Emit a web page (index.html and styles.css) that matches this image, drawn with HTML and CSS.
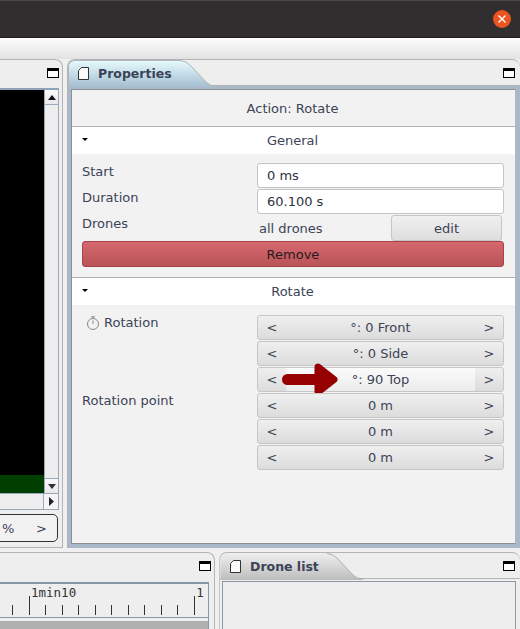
FILE: index.html
```html
<!DOCTYPE html>
<html lang="en">
<head>
<meta charset="utf-8">
<title>Properties</title>
<link rel="stylesheet" href="styles.css">
</head>
<body>
<div class="app">
  <header class="titlebar">
    <div class="close">
      <svg width="18" height="18" viewBox="0 0 18 18"><path d="M5.500 5.500l7 7M12.500 5.500l-7 7" stroke="#fff" stroke-width="1.400" fill="none"/></svg>
    </div>
  </header>
  <div class="toolbar"></div>

  <div class="row row-top">
    <section class="panel panel-viewer">
      <div class="head head-plain"><span class="maxi"></span></div>
      <div class="viewer">
        <div class="viewer-main">
          <div class="canvas"><div class="green"></div></div>
          <div class="vscroll">
            <div class="sbtn"><svg width="8" height="5" viewBox="0 0 8 5"><path d="M4 0l4 5H0z" fill="#111"/></svg></div>
            <div class="strack"></div>
            <div class="sbtn sbtn-end"><svg width="8" height="5" viewBox="0 0 8 5"><path d="M0 0h8L4 5z" fill="#333"/></svg></div>
          </div>
        </div>
        <div class="hscroll">
          <div class="htrack"></div>
          <div class="hbtn"><svg width="5" height="9" viewBox="0 0 5 9"><path d="M0 0l5 4.500L0 9z" fill="#222"/></svg></div>
        </div>
      </div>
      <div class="zoombox"><span class="pct">%</span><span class="gt">&gt;</span></div>
    </section>

    <section class="panel panel-props">
      <div class="head">
        <div class="tab">
          <svg class="tab-shape" width="148" height="27" viewBox="0 0 148 27">
            <defs><linearGradient id="tabsel" x1="0" y1="0" x2="0" y2="1"><stop offset="0" stop-color="#e6fbfd"/><stop offset="1" stop-color="#a4bfd2"/></linearGradient></defs>
            <path d="M0.500 27V7Q0.500 1 7 0.500H112Q118 0.500 123 6L138 22Q142 26 148 26V27Z" fill="url(#tabsel)"/>
            <path d="M0.500 27V7Q0.500 1 7 0.500H112Q118 0.500 123 6L138 22Q142 26 148 26" fill="none" stroke="#b0b5b8"/>
          </svg>
          <svg class="doc" width="11" height="13" viewBox="0 0 11 13"><path d="M3.500 0.500H10.500V12.500H0.500V3.500Z" fill="#fafafa" stroke="#333"/></svg>
          <span class="tab-title">Properties</span>
        </div>
        <span class="maxi"></span>
      </div>
      <div class="frame">
        <div class="inner">
          <div class="action">Action: Rotate</div>
          <div class="section-head"><span class="caret"></span>General</div>
          <div class="section-body general">
            <span class="lbl">Start</span><div class="field">0 ms</div>
            <span class="lbl">Duration</span><div class="field">60.100 s</div>
            <span class="lbl">Drones</span>
            <div class="drones"><span>all drones</span><button class="btn edit">edit</button></div>
            <button class="remove">Remove</button>
          </div>
          <div class="section-head"><span class="caret"></span>Rotate</div>
          <div class="section-body rotate">
            <span class="lbl lbl-rot">
              <svg width="14" height="14" viewBox="0 0 14 14"><circle cx="7" cy="8" r="5.500" fill="none" stroke="#8a8a8a"/><path d="M5 0.800h4M7 1v1.500M7 8V4.500" stroke="#8a8a8a" fill="none"/></svg>
              Rotation
            </span>
            <div class="spin"><span>&lt;</span><em>°: 0 Front</em><span>&gt;</span></div>
            <span></span>
            <div class="spin"><span>&lt;</span><em>°: 0 Side</em><span>&gt;</span></div>
            <span></span>
            <div class="spin spin-hover"><span>&lt;</span><em>°: 90 Top</em><span>&gt;</span>
              <svg class="arrow" width="56" height="33" viewBox="0 0 56 33"><path d="M5.500 16.500H40" stroke="#960000" stroke-width="11" stroke-linecap="round" fill="none"/><path d="M36 4L52 16.500L36 29Z" fill="#960000" stroke="#960000" stroke-width="7" stroke-linejoin="round"/></svg>
            </div>
            <span class="lbl">Rotation point</span>
            <div class="spin"><span>&lt;</span><em>0 m</em><span>&gt;</span></div>
            <span></span>
            <div class="spin"><span>&lt;</span><em>0 m</em><span>&gt;</span></div>
            <span></span>
            <div class="spin"><span>&lt;</span><em>0 m</em><span>&gt;</span></div>
          </div>
        </div>
      </div>
    </section>
  </div>

  <div class="row row-bottom">
    <section class="panel panel-time">
      <div class="head head-plain"><span class="maxi"></span></div>
      <div class="timeline">
        <div class="ruler">
          <div class="labels"><span class="l1">1min10</span><span class="l2">1</span></div>
          <div class="ticks">
            <i></i><i class="major"></i><i></i><i></i><i></i><i></i><i></i><i></i><i></i><i></i><i></i><i class="major"></i>
          </div>
        </div>
        <div class="track"></div>
      </div>
    </section>
    <section class="panel panel-drones">
      <div class="head">
        <div class="tab tab-off">
          <svg class="tab-shape" width="143" height="27" viewBox="0 0 143 27">
            <defs><linearGradient id="taboff" x1="0" y1="0" x2="0" y2="1"><stop offset="0" stop-color="#eeeeee"/><stop offset="1" stop-color="#bdbdbd"/></linearGradient></defs>
            <path d="M0.500 27V7Q0.500 1 7 0.500H107Q113 0.500 118 6L133 22Q137 26 143 26V27Z" fill="url(#taboff)"/>
            <path d="M107 0.500Q113 0.500 118 6L133 22Q137 26 143 26" fill="none" stroke="#b0b0b0"/>
          </svg>
          <svg class="doc" width="11" height="13" viewBox="0 0 11 13"><path d="M3.500 0.500H10.500V12.500H0.500V3.500Z" fill="#fafafa" stroke="#333"/></svg>
          <span class="tab-title">Drone list</span>
        </div>
        <span class="maxi"></span>
      </div>
      <div class="drone-body"></div>
    </section>
  </div>
</div>
</body>
</html>
```

FILE: styles.css
```css
* { box-sizing: border-box; }
html, body { margin: 0; padding: 0; }
body {
  width: 520px;
  height: 629px;
  overflow: hidden;
  font-family: "DejaVu Sans", sans-serif;
  font-size: 13px;
  color: #3c4356;
  background: #f0f0f0;
}
.app { display: flex; flex-direction: column; height: 629px; overflow: hidden; }

.titlebar {
  height: 38px;
  flex: none;
  background: #302e2e;
  border-top: 1px solid #4a4848;
  border-bottom: 1px solid #1d1b1b;
  display: flex;
  justify-content: flex-end;
  align-items: center;
  padding: 0 9px 0 0;
}
.close {
  width: 18px;
  height: 18px;
  border-radius: 50%;
  background: #ea5420;
  display: flex;
}
.toolbar {
  height: 21px;
  flex: none;
  background: linear-gradient(#fdfdfd, #e2e2e2);
}

.row { display: flex; gap: 4px; flex: none; }
.row-top { height: 489px; }
.row-bottom { height: 77px; margin-top: 4px; gap: 4px; }

.panel {
  background: #eeeeee;
  border: 1px solid #b4b4b4;
  border-left: 0;
  border-top-right-radius: 8px;
  position: relative;
  display: flex;
  flex-direction: column;
}
.panel-viewer { width: 63px; flex: none; }
.panel-props { width: 453px; flex: none; border-left: 1px solid #b4b4b4; border-top-left-radius: 8px; border-right: 0; border-bottom: 0; }
.panel-time { width: 215px; flex: none; border-bottom: 0; }
.panel-drones { width: 301px; flex: none; border-left: 1px solid #c4c4c4; border-top-left-radius: 8px; border-right: 0; border-bottom: 0; }

.head {
  height: 26px;
  flex: none;
  display: flex;
  justify-content: space-between;
  align-items: center;
  border-bottom: 1px solid #b4b4b4;
  padding-right: 5px;
}
.head-plain { justify-content: flex-end; padding-right: 3px; border-bottom: 0; }
.maxi {
  width: 12px;
  height: 10px;
  border: 1px solid #000;
  border-top-width: 3px;
  background: #fdfdfd;
  flex: none;
}
.tab {
  position: relative;
  align-self: flex-start;
  height: 26px;
  width: 148px;
  display: flex;
  align-items: center;
  padding-left: 10px;
  gap: 9px;
}
.tab-off { width: 143px; }
.tab-shape { position: absolute; left: 0; top: 0; }
.doc, .tab-title { position: relative; }
.tab-title { font-weight: bold; font-size: 12.5px; }

/* viewer */
.viewer {
  border-top: 2px solid #8fa3b8;
  border-right: 1px solid #9aa9ba;
  border-bottom: 1px solid #9aa9ba;
  margin-top: 2px;
  margin-right: 3px;
  display: flex;
  flex-direction: column;
}
.viewer-main { display: flex; height: 403px; }
.canvas {
  flex: 1;
  background: #000;
  display: flex;
  flex-direction: column;
  justify-content: flex-end;
}
.green { height: 18px; background: #003f00; }
.vscroll {
  width: 14px;
  flex: none;
  background: #eeeeee;
  border-left: 1px solid #9aa9ba;
  display: flex;
  flex-direction: column;
}
.sbtn {
  height: 15px;
  background: linear-gradient(#fafafa, #e8e8e8);
  border-bottom: 1px solid #9aa9ba;
  display: flex;
  align-items: center;
  justify-content: center;
  flex: none;
}
.sbtn-end { border-bottom: 0; border-top: 1px solid #9aa9ba; }
.strack { flex: 1; }
.hscroll { display: flex; height: 16px; border-top: 1px solid #9aa9ba; }
.htrack { flex: 1; background: #eeeeee; }
.hbtn {
  width: 15px;
  border-left: 1px solid #9aa9ba;
  background: #f4f4f4;
  display: flex;
  align-items: center;
  justify-content: center;
  flex: none;
}
.zoombox {
  height: 28px;
  margin: 4px 4px 0 -8px;
  border: 1px solid #333;
  border-radius: 5px;
  background: #f2f2f2;
  display: flex;
  align-items: center;
  justify-content: space-between;
  padding: 0 10px 0 9px;
  flex: none;
}

/* properties */
.frame {
  flex: 1;
  border: 3px solid #a9b9ca;
  border-right-width: 4px;
  border-bottom-width: 4px;
  min-height: 0;
}
.inner {
  height: 100%;
  border: 1px solid #8c8f93;
  border-right-color: #b8b8b8;
  background: #f2f2f2;
  display: flex;
  flex-direction: column;
}
.action {
  height: 37px;
  flex: none;
  display: flex;
  align-items: center;
  justify-content: center;
  border-bottom: 1px solid #b0b0b0;
  padding-right: 2px;
}
.section-head {
  height: 27px;
  flex: none;
  background: #fff;
  position: relative;
  display: flex;
  align-items: center;
  justify-content: center;
  padding-right: 2px;
}
.caret {
  position: absolute;
  left: 10px;
  top: 11px;
  width: 0;
  height: 0;
  border: 3px solid transparent;
  border-top: 3px solid #000;
  border-bottom: 0;
}
.section-body {
  display: grid;
  grid-template-columns: 175px 247px;
  grid-auto-rows: 26px;
  padding: 9px 0 0 10px;
  align-items: start;
}
.general { border-bottom: 1px solid #b0b0b0; flex: none; box-sizing: content-box; height: 113px; padding-bottom: 1px; }
.general .lbl { padding-top: 1px; }
.rotate { padding-top: 10px; }
.lbl { line-height: 16px; display: block; }
.lbl-rot { padding-left: 4px; display: flex; align-items: center; gap: 4px; }
.field {
  height: 25px;
  background: #fff;
  border: 1px solid #c4c4c4;
  border-radius: 3px;
  display: flex;
  align-items: center;
  padding-left: 9px;
  color: #2e3340;
}
.drones {
  display: flex;
  justify-content: space-between;
  align-items: center;
  padding-left: 2px;
  padding-right: 2px;
  height: 26px;
}
.btn {
  font: inherit;
  color: inherit;
  width: 111px;
  height: 26px;
  border: 1px solid #c6c6c6;
  border-radius: 3px;
  background: linear-gradient(#f0f0f0, #dedede);
  padding: 0;
}
.remove {
  grid-column: 1 / -1;
  height: 26px;
  font: inherit;
  color: #2a1a1e;
  padding: 0;
  border: 1px solid #a5444c;
  border-radius: 3px;
  background: linear-gradient(#d4686e, #b95458);
}
.spin {
  position: relative;
  height: 25px;
  border: 1px solid #c6c6c6;
  border-radius: 3px;
  background: linear-gradient(#efefef, #dcdcdc);
  display: flex;
  align-items: center;
  justify-content: space-between;
}
.spin span { width: 28px; text-align: center; flex: none; }
.spin em { font-style: normal; flex: 1; text-align: center; }
.spin-hover em {
  align-self: stretch;
  line-height: 23px;
  background: linear-gradient(#fbfbfb, #ececec);
}
.arrow { position: absolute; left: 24px; top: -5px; }

/* timeline */
.timeline {
  flex: none;
  width: 209px;
  border-top: 2px solid #8496a8;
  margin-top: 3px;
  border-right: 1px solid #8c98a5;
}
.ruler { height: 34px; background: #eeeeee; border-bottom: 1px solid #8c98a5; display: flex; flex-direction: column; }
.labels {
  height: 12px;
  font-family: "DejaVu Sans Mono", monospace;
  font-size: 12.5px;
  line-height: 15px;
  color: #333;
  display: flex;
  padding: 1px 0 0 31px;
  gap: 120px;
}
.ticks {
  height: 19px;
  display: flex;
  align-items: flex-end;
  gap: 15.5px;
  padding-left: 12px;
}
.ticks i { display: block; width: 1px; height: 10px; background: #333; flex: none; }
.ticks i.major { height: 19px; }
.track { height: 12px; margin-top: 3px; background: #b0b0b0; }

/* drone list */
.drone-body {
  flex: 1;
  margin: 2px 4px 0 2px;
  border: 1px solid #8c98a5;
  border-bottom: 0;
  background: #eeeeee;
}
```
